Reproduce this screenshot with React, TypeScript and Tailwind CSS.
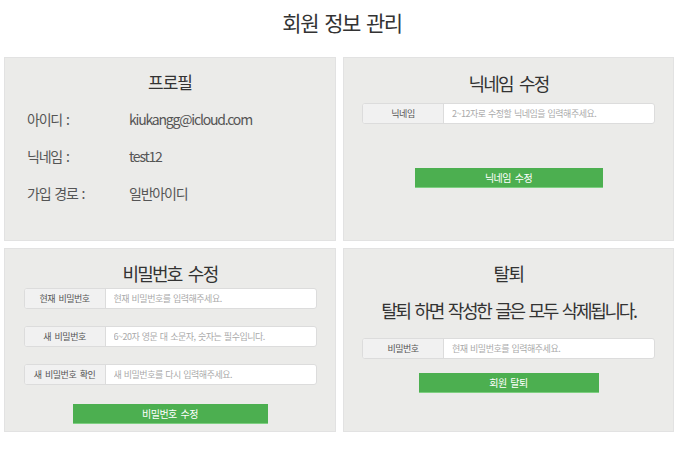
const font = { fontFamily: '"Noto Sans CJK KR", "Noto Sans", sans-serif' };

const InputRow = ({ label, placeholder }: { label: string; placeholder: string }) => {
  return (
    <div className="flex h-[21px] w-full rounded-[3px] border border-[#dcdcdc] bg-white overflow-hidden">
      <div className="w-[81px] shrink-0 flex items-center justify-center bg-[#f1f1f1] border-r border-[#dcdcdc] text-[9px] text-[#555] tracking-[-0.5px] [word-spacing:2px]">
        {label}
      </div>
      <input
        className="flex-1 px-2 text-[9px] text-[#555] outline-none placeholder:text-[#aaa] tracking-[-0.5px] [word-spacing:1px]"
        placeholder={placeholder}
      />
    </div>
  );
};

const GreenButton = ({ children, w }: { children: string; w: string }) => {
  return (
    <button className={`${w} h-[20px] bg-[#4caf50] border-b border-[#7dcf80] text-white text-[10px] tracking-[-0.5px] [word-spacing:2px]`}>
      {children}
    </button>
  );
};

const Card = ({ children }: { children: React.ReactNode }) => (
  <div className="h-[184px] bg-[#ebebe9] border border-[#e2e2e2] flex flex-col items-center">{children}</div>
);

export default function App() {
  return (
    <div className="w-[684px] h-[453px] bg-white" style={font}>
      <h1 className="h-[57px] pt-[8px] text-center text-[21px] text-[#333] tracking-[-1.5px] [word-spacing:3px] leading-[28px]">
        회원 정보 관리
      </h1>
      <div className="grid grid-cols-[332px_331px] gap-x-[7px] gap-y-[7px] pl-[4px]">
        <Card>
          <h2 className="mt-[12px] text-[17px] text-[#333] tracking-[-1px] leading-[24px]">프로필</h2>
          <div className="self-stretch pl-[22px] mt-[15px] flex flex-col gap-[16px] text-[14px] text-[#555] tracking-[-1.2px] [word-spacing:2px]">
            {[
              ['아이디 :', 'kiukangg@icloud.com'],
              ['닉네임 :', 'test12'],
              ['가입 경로 :', '일반아이디'],
            ].map(([k, v]) => (
              <div key={k} className="flex leading-[21px]">
                <span className="w-[102px]">{k}</span>
                <span>{v}</span>
              </div>
            ))}
          </div>
        </Card>
        <Card>
          <h2 className="mt-[12px] text-[18px] text-[#333] tracking-[-1.8px] [word-spacing:4px] leading-[26px]">닉네임 수정</h2>
          <div className="w-[293px] mt-[7px]">
            <InputRow label="닉네임" placeholder="2~12자로 수정할 닉네임을 입력해주세요." />
          </div>
          <div className="mt-[39px]">
            <GreenButton w="w-[188px]">닉네임 수정</GreenButton>
          </div>
        </Card>
        <Card>
          <h2 className="mt-[11px] text-[18px] text-[#333] tracking-[-1.8px] [word-spacing:4px] leading-[26px]">비밀번호 수정</h2>
          <div className="w-[293px] mt-[2px] flex flex-col gap-[17px]">
            <InputRow label="현재 비밀번호" placeholder="현재 비밀번호를 입력해주세요." />
            <InputRow label="새 비밀번호" placeholder="6~20자 영문 대 소문자, 숫자는 필수입니다." />
            <InputRow label="새 비밀번호 확인" placeholder="새 비밀번호를 다시 입력해주세요." />
          </div>
          <div className="mt-[14px]">
            <GreenButton w="w-[195px]">비밀번호 수정</GreenButton>
          </div>
        </Card>
        <Card>
          <h2 className="mt-[11px] text-[18px] text-[#333] tracking-[-1.5px] leading-[26px]">탈퇴</h2>
          <p className="mt-[11px] text-[18px] text-[#333] tracking-[-2.3px] [word-spacing:3px] leading-[26px]">
            탈퇴 하면 작성한 글은 모두 삭제됩니다.
          </p>
          <div className="w-[293px] mt-[15px]">
            <InputRow label="비밀번호" placeholder="현재 비밀번호를 입력해주세요." />
          </div>
          <div className="mt-[9px]">
            <GreenButton w="w-[180px]">회원 탈퇴</GreenButton>
          </div>
        </Card>
      </div>
    </div>
  );
}
